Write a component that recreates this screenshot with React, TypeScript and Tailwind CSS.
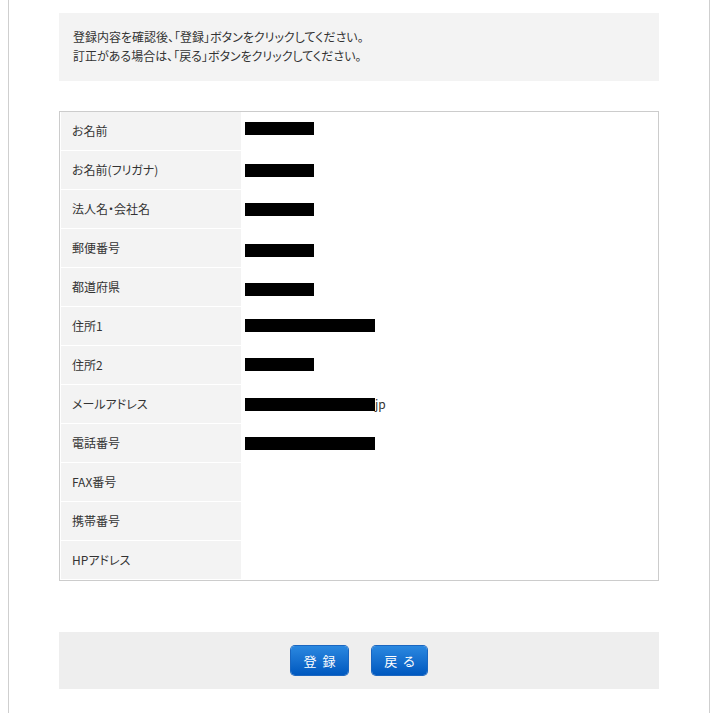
import React from "react";

const rows: { label: string; boxes?: { w: number; dy: number }; extra?: string }[] = [
  { label: "お名前", boxes: { w: 69, dy: -3 } },
  { label: "お名前(フリガナ)", boxes: { w: 69, dy: 0 } },
  { label: "法人名・会社名", boxes: { w: 69, dy: 0 } },
  { label: "郵便番号", boxes: { w: 69, dy: 2 } },
  { label: "都道府県", boxes: { w: 69, dy: 2 } },
  { label: "住所1", boxes: { w: 130, dy: -1 } },
  { label: "住所2", boxes: { w: 69, dy: -1 } },
  { label: "メールアドレス", boxes: { w: 130, dy: 0 }, extra: "jp" },
  { label: "電話番号", boxes: { w: 130, dy: 0 } },
  { label: "FAX番号" },
  { label: "携帯番号" },
  { label: "HPアドレス" },
];

export default function App() {
  return (
    <div
      className="min-h-[713px] bg-white text-[12px] text-[#333] [font-feature-settings:'palt']"
      style={{ fontFamily: '"Noto Sans CJK JP", "Noto Sans", sans-serif' }}
    >
      <div className="ml-[8px] w-[702px] min-h-[713px] border-x border-[#cfcfcf] pt-[13px]">
        <div className="ml-[50px] w-[600px]">
          <div className="bg-[#f3f3f3] h-[68px] pl-[14px] pt-[14px] leading-[19px]">
            <p>登録内容を確認後、「登録」ボタンをクリックしてください。</p>
            <p>訂正がある場合は、「戻る」ボタンをクリックしてください。</p>
          </div>

          <div className="mt-[30px] border border-[#cccccc] pl-[1px]">
            {rows.map((r, i) => (
              <div key={i} className="flex h-[39px] border-b border-white">
                <div className="w-[180px] bg-[#f3f3f3] pl-[11px] flex items-center">
                  {r.label}
                </div>
                <div className="flex items-center pl-[4px]">
                  {r.boxes && (
                    <div
                      className="relative flex items-center"
                      style={{ top: r.boxes.dy }}
                    >
                      <div
                        className="h-[13px] bg-black"
                        style={{ width: r.boxes.w }}
                      />
                      {r.extra && <span className="leading-none">{r.extra}</span>}
                    </div>
                  )}
                </div>
              </div>
            ))}
          </div>

          <div className="mt-[51px] bg-[#eeeeee] h-[57px] flex items-center justify-center gap-[24px]">
            <button className="w-[57px] h-[29px] rounded-[4px] bg-gradient-to-b from-[#2a88e0] to-[#0058bf] text-white text-[13px] tracking-[6px] pl-[6px] shadow-[0_0_0_1px_#1a66c0]">
              登録
            </button>
            <button className="w-[55px] h-[29px] rounded-[4px] bg-gradient-to-b from-[#2a88e0] to-[#0058bf] text-white text-[13px] tracking-[6px] pl-[6px] shadow-[0_0_0_1px_#1a66c0]">
              戻る
            </button>
          </div>
        </div>
      </div>
    </div>
  );
}
